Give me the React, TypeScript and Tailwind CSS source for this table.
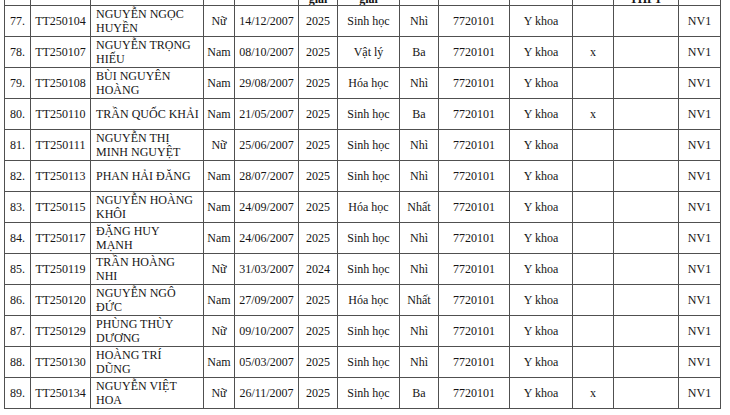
const ROWS: string[][] = [
  ["77.", "TT250104", "NGUYỄN NGỌC|HUYỀN", "Nữ", "14/12/2007", "2025", "Sinh học", "Nhì", "7720101", "Y khoa", "", "", "NV1"],
  ["78.", "TT250107", "NGUYỄN TRỌNG|HIẾU", "Nam", "08/10/2007", "2025", "Vật lý", "Ba", "7720101", "Y khoa", "x", "", "NV1"],
  ["79.", "TT250108", "BÙI NGUYÊN|HOÀNG", "Nam", "29/08/2007", "2025", "Hóa học", "Nhì", "7720101", "Y khoa", "", "", "NV1"],
  ["80.", "TT250110", "TRẦN QUỐC KHẢI", "Nam", "21/05/2007", "2025", "Sinh học", "Ba", "7720101", "Y khoa", "x", "", "NV1"],
  ["81.", "TT250111", "NGUYỄN THỊ|MINH NGUYỆT", "Nữ", "25/06/2007", "2025", "Sinh học", "Nhì", "7720101", "Y khoa", "", "", "NV1"],
  ["82.", "TT250113", "PHAN HẢI ĐĂNG", "Nam", "28/07/2007", "2025", "Sinh học", "Nhì", "7720101", "Y khoa", "", "", "NV1"],
  ["83.", "TT250115", "NGUYỄN HOÀNG|KHÔI", "Nam", "24/09/2007", "2025", "Hóa học", "Nhất", "7720101", "Y khoa", "", "", "NV1"],
  ["84.", "TT250117", "ĐẶNG HUY|MẠNH", "Nam", "24/06/2007", "2025", "Sinh học", "Nhì", "7720101", "Y khoa", "", "", "NV1"],
  ["85.", "TT250119", "TRẦN HOÀNG|NHI", "Nữ", "31/03/2007", "2024", "Sinh học", "Nhì", "7720101", "Y khoa", "", "", "NV1"],
  ["86.", "TT250120", "NGUYỄN NGÔ|ĐỨC", "Nam", "27/09/2007", "2025", "Hóa học", "Nhất", "7720101", "Y khoa", "", "", "NV1"],
  ["87.", "TT250129", "PHÙNG THÙY|DƯƠNG", "Nữ", "09/10/2007", "2025", "Sinh học", "Nhì", "7720101", "Y khoa", "", "", "NV1"],
  ["88.", "TT250130", "HOÀNG TRÍ|DŨNG", "Nam", "05/03/2007", "2025", "Sinh học", "Nhì", "7720101", "Y khoa", "", "", "NV1"],
  ["89.", "TT250134", "NGUYỄN VIỆT|HOA", "Nữ", "26/11/2007", "2025", "Sinh học", "Ba", "7720101", "Y khoa", "x", "", "NV1"],
];

/* column widths, border to border */
const COLS = [26, 60, 113, 31, 64, 39, 62, 39, 71, 63, 41, 65, 42];

/* the header row is cut off by the top edge; only the bottom of a few words shows */
const HEAD = ["", "", "", "", "", "giải", "giải", "", "", "", "", "THPT", ""];

export default function App() {
  return (
    <div
      className="h-[415px] w-[730px] overflow-hidden bg-white pl-[4px] text-[12px] text-[#151515]"
      style={{ fontFamily: '"Liberation Serif", "Times New Roman", serif' }}
    >
      <table className="table-fixed border-collapse">
        <colgroup>
          {COLS.map((w, i) => (
            <col key={i} style={{ width: w }} />
          ))}
        </colgroup>
        <thead>
          <tr>
            {HEAD.map((h, i) => (
              <th key={i} className="border-x border-b border-[#505050] p-0 font-bold">
                <div className="flex h-[5px] items-end justify-center overflow-hidden leading-[12px]">
                  {h}
                </div>
              </th>
            ))}
          </tr>
        </thead>
        <tbody>
          {ROWS.map((r) => (
            <tr key={r[0]} className="h-[31px]">
              {r.map((c, i) => (
                <td
                  key={i}
                  className={
                    i === 2
                      ? "border border-[#505050] py-0 pl-[5px] pr-[2px] text-left leading-[14px]"
                      : "border border-[#505050] p-0 text-center leading-[14px]"
                  }
                >
                  {i === 2
                    ? c.split("|").map((part, j) => (
                        <div key={j}>{part}</div>
                      ))
                    : c}
                </td>
              ))}
            </tr>
          ))}
        </tbody>
      </table>
    </div>
  );
}
